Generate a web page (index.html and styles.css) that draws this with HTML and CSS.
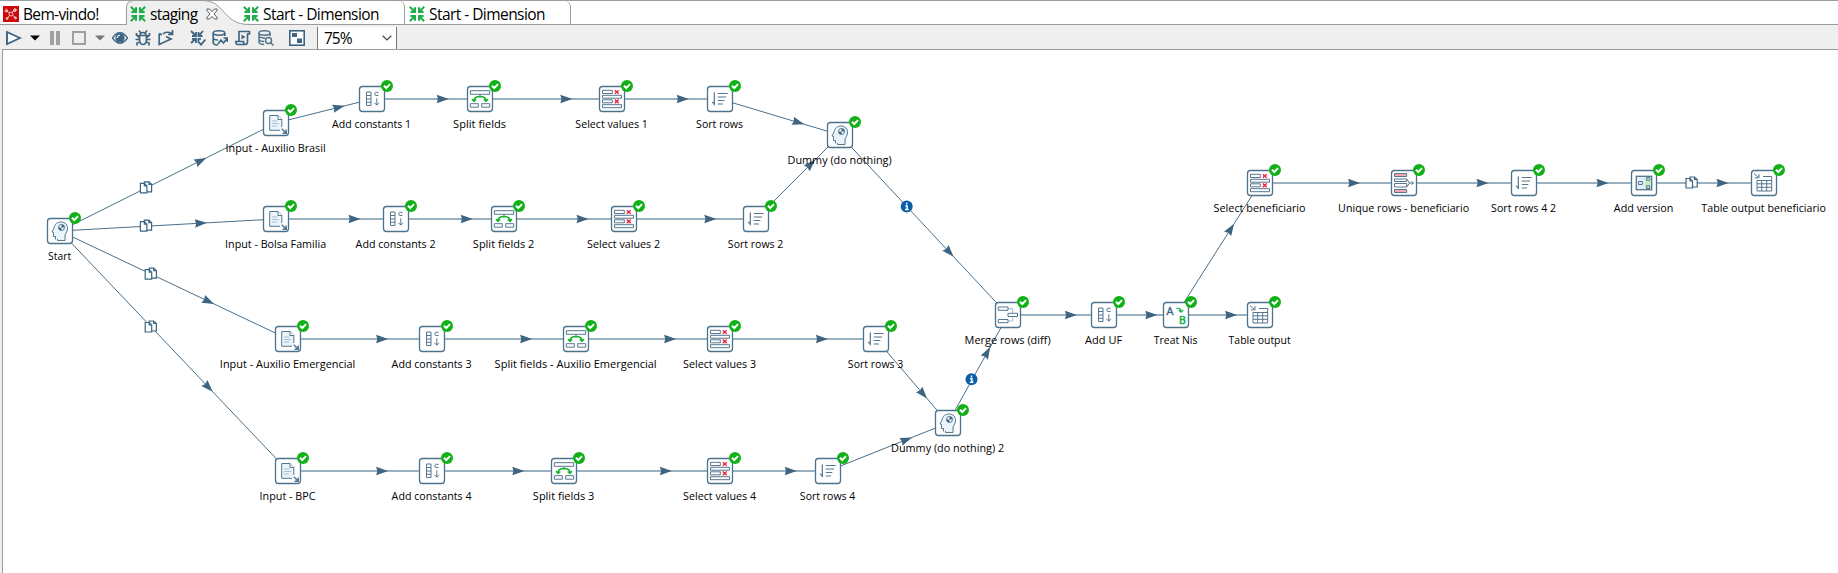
FILE: index.html
```html
<!DOCTYPE html>
<html lang="pt-BR">
<head>
<meta charset="utf-8">
<title>staging</title>
<link rel="stylesheet" href="styles.css">
</head>
<body>
<svg class="defs" width="0" height="0">
  <symbol id="converge" viewBox="0 0 16 16">
    <path d="M.8 .8 5 5M15.2 .8 11 5M.8 15.2 5 11M15.2 15.2 11 11" fill="none" stroke="currentColor" stroke-width="2"/>
    <path d="M7 7H1.400V5L4.200 4.800 5 1.200H7ZM9 7V1.200H11L11.600 4.600 14.600 5V7ZM7 9V14.800H5L4.400 11.400 1.400 11V9ZM9 9H14.600V11L11.600 11.400 11 14.800H9Z" fill="currentColor"/>
  </symbol>
</svg>
<div class="app">
  <nav class="tabs">
    <div class="tab tab-first">
      <svg class="logo" viewBox="0 0 16 16"><rect width="16" height="16" fill="#cc0a0a"/><g fill="none" stroke="#fff" stroke-opacity=".85" stroke-width=".9"><circle cx="8" cy="8" r="2"/><path d="M6.500 6.500 3 5M9.500 6.500 11 3.500M6.500 9.500 4 13M9.500 9.500 13 12M3 2.500 5 5M13 3 11.500 6"/><circle cx="3" cy="5" r="1"/><circle cx="4" cy="12.500" r="1"/><circle cx="12" cy="4" r="1.300"/><circle cx="12.500" cy="12" r="1"/></g></svg>
      <span class="tab-text t-welcome">Bem-vindo!</span>
    </div>
    <div class="tab tab-active">
      <svg class="shape" viewBox="0 0 124 25"><path d="M.5 25V7Q1 .5 8 .5H76C100 .5 96 24.500 123 24.500V25Z" fill="#efefef"/><path d="M.5 25V7Q1 .5 8 .5H76C100 .5 96 24.500 123 24.500" fill="none" stroke="#9c9c9c"/></svg>
      <svg class="conv"><use href="#converge"/></svg>
      <span class="tab-text t-staging">staging</span>
      <svg class="close" viewBox="0 0 12 12"><path d="M1 1H3.500L6 3.600 8.500 1H11V2.700L7.900 6 11 9.300V11H8.500L6 8.400 3.500 11H1V9.300L4.100 6 1 2.700Z" fill="#fff" stroke="#555"/></svg>
    </div>
    <div class="tab tab-dim">
      <svg class="conv"><use href="#converge"/></svg>
      <span class="tab-text t-dim">Start - Dimension</span>
    </div>
    <div class="tab tab-dim tab-last">
      <svg class="conv"><use href="#converge"/></svg>
      <span class="tab-text t-dim">Start - Dimension</span>
    </div>
  </nav>
  <div class="toolbar">
    <svg class="ic run" viewBox="0 0 16 16"><path d="M1 2 14 8 1 14Z" fill="#fff" stroke="#3d6480" stroke-width="1.900"/></svg>
    <svg class="caret" viewBox="0 0 10 6"><path d="M0 .5H10L5 5.500Z" fill="#000"/></svg>
    <svg class="ic pause" viewBox="0 0 16 16"><path d="M2 1H6V15H2ZM8 1H12V15H8Z" fill="#a0a0a0"/></svg>
    <svg class="ic stop" viewBox="0 0 16 16"><rect x="1" y="2" width="12" height="12" fill="none" stroke="#a0a0a0" stroke-width="2"/></svg>
    <svg class="caret caret-stop" viewBox="0 0 10 6"><path d="M0 .5H10L5 5.500Z" fill="#777"/></svg>
    <svg class="ic eye" viewBox="0 0 16 16"><path d="M.5 8Q8-2.500 15.500 8 8 18.500 .5 8Z" fill="#fff" stroke="#3d6480" stroke-width="1.300"/><circle cx="8" cy="8" r="4.700" fill="#3d6480"/><path d="M5.200 8A2.800 2.800 0 0 1 8 5.200" stroke="#fff" fill="none"/></svg>
    <svg class="ic bug" viewBox="0 0 16 16"><g fill="none" stroke="#3d6480" stroke-width="1.700"><path d="M4.500 5.500H11.500V10Q11 14.500 8 14.500T4.500 10ZM5 5.500Q5 2.500 8 2.500T11 5.500M5.500 2.500 4 .5M10.500 2.500 12 .5M4.500 7.500 1.500 5V3M11.500 7.500 14.500 5V3M4.500 9.500H.5M11.500 9.500H15.500M5 12 2 13V15.500M11 12 14 13V15.500"/></g></svg>
    <svg class="ic replay" viewBox="0 0 16 16"><g fill="none" stroke="#3d6480" stroke-width="1.700"><path d="M1.200 3.500V14.500L13 9 8 6.500M1.200 3.500 4 4.700M5 4Q8 .8 14 3.500M14.500 0V4.500H10"/></g></svg>
    <svg class="ic verify" viewBox="0 0 16 16"><g fill="none" stroke="#3d6480" stroke-width="1.800"><path d="M1 1 5.500 5.500M13 1 9 5.500M1 13 5.500 9M2 6H6V2M8.500 2V6H12.500M2 8.800H6V13M8.500 13V8.800H11M9 12.500 11 14.700 15.500 9.500"/></g></svg>
    <svg class="ic db" viewBox="0 0 16 16"><g fill="none" stroke="#3d6480" stroke-width="1.600"><ellipse cx="7" cy="3" rx="5.800" ry="2.200"/><path d="M1.200 3V13Q2 15 6 15M12.800 3V6M1.200 8Q2 10 6 10M6 14 9 10 11.500 13 15 8.500M11.500 8H15.300V12"/></g></svg>
    <svg class="ic script" viewBox="0 0 16 16"><g fill="none" stroke="#3d6480" stroke-width="1.600"><path d="M4 11V1.500H14.500V4H12.500V12Q12.500 14.500 10 14.500H2.500Q.8 14.500 .8 11.500H8.500Q8.500 14.500 10.500 14.500"/></g><path d="M6.500 4.500 10.500 7 6.500 9.500Z" fill="#3d6480"/></svg>
    <svg class="ic dbs" viewBox="0 0 16 16"><g fill="none" stroke="#54748b" stroke-width="1.500"><ellipse cx="6.500" cy="3" rx="5.500" ry="2.200"/><path d="M1 3V12.500Q2 14.500 6 14.500M12 3V6M1 6.500Q3 8.500 7 8M1 10Q2.500 11.500 6 11.500"/><circle cx="10.500" cy="10.500" r="3" fill="#efefef"/><path d="M12.700 12.700 15.500 15.500"/></g></svg>
    <svg class="ic panes" viewBox="0 0 16 16"><rect x=".8" y=".8" width="14.400" height="14.400" fill="#fff" stroke="#3d6480" stroke-width="1.600"/><path d="M3 3H8V7H3ZM8 8.500H13V13H8Z" fill="#3d6480"/></svg>
    <div class="zoom"><span class="zoom-text">75%</span><svg class="chev" viewBox="0 0 10 6"><path d="M.7 .8 5 5 9.300 .8" fill="none" stroke="#444" stroke-width="1.200"/></svg></div>
  </div>
  <main class="canvas">
    <svg id="graph" class="graph" viewBox="3 50 1835 523">
      <defs>
        <g id="box"><rect x="-12.500" y="-12.500" width="25" height="25" rx="3" fill="#fff" stroke="#4d728c" stroke-width="1.300"/></g>
        <g id="ok"><circle cx="15" cy="-13" r="6" fill="#11b017"/><path d="M12-13.300 14.300-11 18-14.900" fill="none" stroke="#fff" stroke-width="2"/></g>
        <g id="head" class="line"><path d="M-4.500 8.500V5.500H-6.500V1.500L-8 1-6-3C-5.500-7-2.500-9 1-9 5-9 8-6 7.500-2 7.300 1 5 3 5 5V9.500H-2.500V8" fill="#eaf4fb"/><circle cx="1.500" cy="-3.500" r="3" fill="#fff"/><path d="M1.500-3.500V-6.500A3 3 0 0 1 4.500-3.500ZM1.500-3.500V-.5A3 3 0 0 1-1.500-3.500Z" fill="#3d6480" stroke="none"/></g>
        <g id="input" class="line"><path d="M4 7.300H-6.300V-7.500H2L5.800-3.500V4" fill="#eaf4fb"/><path d="M2-7.500V-3.500H5.800" fill="#fff"/><path d="M-4-2H1.500M-4 .5H3M-4 3H1" stroke="#a9c0d0"/><path d="M5.800 5.800 10 10M10.200 6.500V10.200H6.500" stroke-width="1.500"/></g>
        <g id="const" class="line"><path d="M-5.500-7H-1V6.500H-5.500ZM-5.500-3.500H-1M-5.500 0H-1M-5.500 3.300H-1M6.500-6.300Q2.500-7.800 2.800-5 2.800-2.500 6.500-3.600M4.800-.8V6M2.500 3.800 4.800 6.200 7 3.800"/></g>
        <g id="split" class="line"><path d="M-9.700-8.300H9.700V-4.700H-9.700ZM-9.700 4.700H-1.700V8.200H-9.700ZM1.700 4.700H9.700V8.200H1.700Z"/><path d="M-6 2Q-6-2.300-1.500-2.300H1.500Q6-2.300 6 2M0-4V-2M-8 0-6 2.500-3.700 .5M8 0 6 2.500 3.700 .5" stroke="#17b52c" stroke-width="1.500"/></g>
        <g id="select" class="line"><path d="M-9.500-8.700H.3V-5.500H-9.500ZM-9.500-3.700H9.500V-.8H-9.500ZM-9.500 .8H.3V3.800H-9.500ZM-9.500 5.700H9.500V8.700H-9.500Z"/><path d="M2.800-8.800 6.700-5.200M6.700-8.800 2.800-5.200M2.800 .5 6.700 4.100M6.700 .5 2.800 4.100" stroke="#ee2840" stroke-width="1.500"/></g>
        <g id="sort" class="line"><path d="M-5.700-6.500V5M-7.700 2.800-5.700 5.300V2.800M-2.300-5.500H7.700M-2.300-2H6M-2.300 1.500H4.300M-2.300 5H3" stroke-width="1.200"/></g>
        <g id="merge" class="line"><path d="M0-6.300H4.700V6H0" stroke="#a9bccb"/><path d="M-9.700-8H0V-4.700H-9.700ZM-9.700 4.500H0V7.700H-9.700ZM0-1.700H9.500V1.500H0Z" fill="#fff"/></g>
        <g id="treat" class="line"><text x="-9.500" y="-.3" class="letter" fill="#3d6480" stroke="#3d6480">A</text><text x="3" y="8.800" class="letter letter-b" fill="#17b54a" stroke="#17b54a">B</text><path d="M.5-6.500Q5-7.500 5-3.500M2.700-5 5-2.800 7.200-5" stroke="#17b54a" stroke-width="1.200"/></g>
        <g id="table" class="line"><path d="M-10-9.500-5.500-5.500M-5-9V-5.200H-9"/><path d="M-1-6.500H7.700V8H-7V-2.500H7.700M-7 .8H7.700M-7 4.300H7.700M-2.300-2.500V8M2.700-2.500V8"/></g>
        <g id="unique" class="line"><path d="M-9.500-9.500H2.700V-6.500H-9.500ZM-9.500-4H2.700V-1.500H-9.500ZM-9.500 .5H2.700V4H-9.500ZM-9.500 6.500H2.700V9.500H-9.500Z"/><path d="M-8.500-8H2M-8.500 8H2" stroke="#e8505a" stroke-width="2" stroke-dasharray="1 1"/><path d="M2.700-4 5.500 0 2.700 4M5.500 0H9.500M7.500-1.500 9.500 0 7.500 1.500"/></g>
        <g id="version" class="line"><rect x="-7.700" y="-6.700" width="15.400" height="13.400" fill="#dfeefa" stroke-width="1.300"/><path d="M1-6H7V6H1Z" fill="#c8ebc6" stroke="none"/><path d="M-5.500-1.500H-1.700V1.500H-5.500ZM2.700-5.500H5.700V-2.700H2.700ZM2.700 2.700H5.700V5.500H2.700Z"/></g>
        <g id="copy" class="line page"><path d="M-1.500-5.500H3L5.700-3V4.500H-1.500Z" fill="#fff"/><path d="M-5.500-4H-1.500L1-1.500V5.500H-5.500Z" fill="#fff"/><path d="M-1.500-4V-1.500H1M3-5.500V-3H5.700"/></g>
        <g id="info"><circle r="6" fill="#0a5fa8"/><path d="M0-3.700V-1.900M-1.400-.5H.4V3M-1.700 3H1.900" fill="none" stroke="#fff" stroke-width="1.500"/></g>
      </defs>
    </svg>
  </main>
</div>
<script src="graph.js"></script>
</body>
</html>
```
FILE: styles.css
```css
* { box-sizing: border-box; }
body { margin: 0; background: #efefef; font-family: "Open Sans", "Noto Sans", sans-serif; color: #000; }
.defs { position: absolute; }
.app { display: flex; flex-direction: column; width: 1838px; height: 573px; overflow: hidden; }
.tabs { display: flex; height: 25px; background: #fff; border-top: 1px solid #9c9c9c; border-bottom: 1px solid #9c9c9c; }
.tab { display: flex; align-items: center; height: 23px; }
.tab svg { flex: none; }
.tab-first { width: 126px; padding-left: 3px; padding-top: 2px; gap: 4px; }
.logo { width: 16px; height: 16px; }
.conv { width: 16px; height: 16px; color: #1fae4b; }
.tab-active { position: relative; width: 117px; padding-left: 4px; padding-top: 2px; }
.tab-active > * { position: relative; }
.tab-active .shape { position: absolute; left: 0; top: -1px; width: 124px; height: 25px; }
.close { width: 12px; height: 12px; margin-left: 7px; }
.tab-dim { width: 162px; padding-top: 2px; gap: 4px; border-right: 1px solid #9c9c9c; border-top-right-radius: 6px; }
.tab-last { width: 166px; padding-left: 4px; }
.tab-text { font-size: 15.500px; line-height: 20px; white-space: nowrap; }
.t-welcome { letter-spacing: -.65px; }
.t-staging { margin-left: 4px; width: 49px; letter-spacing: -.6px; }
.t-dim { letter-spacing: -.55px; }
.toolbar { display: flex; align-items: center; height: 24px; padding: 2px 0 0 6px; }
.ic { flex: none; width: 16px; height: 16px; }
.caret { flex: none; width: 10px; height: 6px; margin-left: 8px; }
.caret-stop { margin-left: 7px; }
.pause { margin-left: 8px; }
.stop { margin-left: 8px; }
.eye { margin-left: 7px; }
.bug { margin-left: 7px; }
.replay { margin-left: 7px; }
.verify { margin-left: 16px; }
.db { margin-left: 6px; }
.script { margin-left: 7px; }
.dbs { margin-left: 7px; }
.panes { margin-left: 15px; }
.zoom { display: flex; align-items: center; justify-content: space-between; width: 80px; height: 22px; margin-left: 12px; padding: 0 4px 0 6px; background: #fff; border: solid #777; border-width: 0 1px; }
.zoom-text { font-size: 15.500px; line-height: 20px; letter-spacing: -1px; }
.chev { width: 10px; height: 6px; }
.canvas { display: flex; flex: 1; margin-left: 2px; background: #fff; border-left: 1px solid #9c9c9c; border-top: 1px solid #9c9c9c; }
.graph { display: block; width: 1835px; height: 523px; }
.line { fill: none; stroke: #54768f; stroke-width: 1; }
.page { stroke: #3d6480; stroke-width: 1.200; }
.hop { stroke: #4a6f8a; stroke-width: 1; }
.hop-flat { stroke: #9ab0bf; stroke-width: 2; }
.arrow { fill: #3d6480; }
.label { font-size: 11.200px; fill: #000; }
.letter { font-size: 11px; stroke-width: .4; }
.letter-b { font-size: 10.500px; stroke-width: .6; }
```
FILE: graph.js
```js
// name: [icon, x, y, label, label width]
const steps = {
  start: ["head", 60, 231, "Start", 23],
  inAB: ["input", 276, 123, "Input - Auxilio Brasil", 100],
  c1: ["const", 372, 99, "Add constants 1", 79],
  sp1: ["split", 480, 99, "Split fields", 53],
  se1: ["select", 612, 99, "Select values 1", 72.5],
  so1: ["sort", 720, 99, "Sort rows", 47],
  d1: ["head", 840, 135, "Dummy (do nothing)", 104],
  inBF: ["input", 276, 219, "Input - Bolsa Familia", 101],
  c2: ["const", 396, 219, "Add constants 2", 80],
  sp2: ["split", 504, 219, "Split fields 2", 61.5],
  se2: ["select", 624, 219, "Select values 2", 73],
  so2: ["sort", 756, 219, "Sort rows 2", 55.5],
  inAE: ["input", 288, 339, "Input - Auxilio Emergencial", 135.5],
  c3: ["const", 432, 339, "Add constants 3", 80],
  sp3: ["split", 576, 339, "Split fields - Auxilio Emergencial", 162],
  se3: ["select", 720, 339, "Select values 3", 73],
  so3: ["sort", 876, 339, "Sort rows 3", 55.5],
  inBPC: ["input", 288, 471, "Input - BPC", 56],
  c4: ["const", 432, 471, "Add constants 4", 80],
  sp4: ["split", 564, 471, "Split fields 3", 61.5],
  se4: ["select", 720, 471, "Select values 4", 73],
  so4: ["sort", 828, 471, "Sort rows 4", 55.5],
  d2: ["head", 948, 423, "Dummy (do nothing) 2", 113],
  merge: ["merge", 1008, 315, "Merge rows (diff)", 86],
  uf: ["const", 1104, 315, "Add UF", 37],
  nis: ["treat", 1176, 315, "Treat Nis", 43.5],
  out: ["table", 1260, 315, "Table output", 62],
  ben: ["select", 1260, 183, "Select beneficiario", 92],
  uniq: ["unique", 1404, 183, "Unique rows - beneficiario", 131],
  so42: ["sort", 1524, 183, "Sort rows 4 2", 65],
  ver: ["version", 1644, 183, "Add version", 59.5],
  outB: ["table", 1764, 183, "Table output beneficiario", 124.5]
};

const hops = [
  ["start", "inAB", "copy"], ["start", "inBF", "copy"], ["start", "inAE", "copy"], ["start", "inBPC", "copy"],
  ["inAB", "c1"], ["c1", "sp1"], ["sp1", "se1"], ["se1", "so1"], ["so1", "d1"],
  ["inBF", "c2"], ["c2", "sp2"], ["sp2", "se2"], ["se2", "so2"], ["so2", "d1"],
  ["inAE", "c3"], ["c3", "sp3"], ["sp3", "se3"], ["se3", "so3"], ["so3", "d2"],
  ["inBPC", "c4"], ["c4", "sp4"], ["sp4", "se4"], ["se4", "so4"], ["so4", "d2"],
  ["d1", "merge", "info"], ["d2", "merge", "info"],
  ["merge", "uf"], ["uf", "nis"], ["nis", "out"], ["nis", "ben"],
  ["ben", "uniq"], ["uniq", "so42"], ["so42", "ver"], ["ver", "outB", "copy"]
];

let lines = "";
let boxes = "";
for (const [from, to, mark] of hops) {
  const [, x1, y1] = steps[from];
  const [, x2, y2] = steps[to];
  const dx = x2 - x1;
  const dy = y2 - y1;
  const angle = Math.atan2(dy, dx) * 180 / Math.PI;
  lines += `<line class="hop${dy ? "" : " hop-flat"}" x1="${x1}" y1="${y1}" x2="${x2}" y2="${y2}"/>`;
  lines += `<path class="arrow" d="M6.500 0-5.500-4.200-4.300 0-5.500 4.200Z" transform="translate(${x1 + dx * 0.65} ${y1 + dy * 0.65}) rotate(${angle})"/>`;
  if (mark) lines += `<use href="#${mark}" x="${x1 + dx * 0.4 - 0.5}" y="${y1 + dy * 0.4 - 0.5}"/>`;
}
for (const [icon, x, y, label, width] of Object.values(steps)) {
  boxes += `<g transform="translate(${x} ${y})"><use href="#box"/><use href="#${icon}"/><use href="#ok"/>` +
    `<text class="label" x="${-width / 2 - 0.4}" y="29" textLength="${width}" lengthAdjust="spacingAndGlyphs">${label}</text></g>`;
}
document.getElementById("graph").insertAdjacentHTML("beforeend", lines + boxes);
```
